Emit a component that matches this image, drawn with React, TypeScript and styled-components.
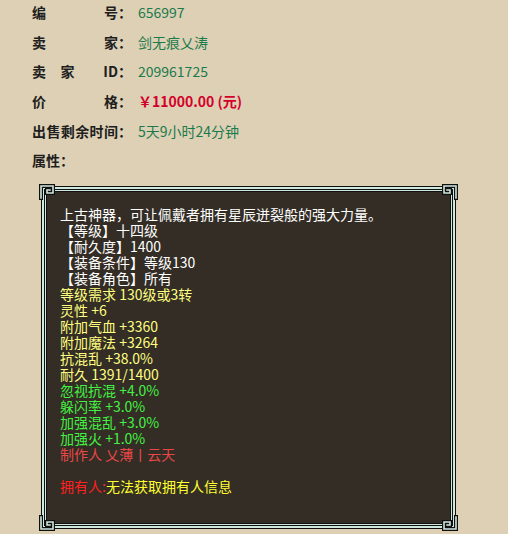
import styled, { createGlobalStyle } from "styled-components";

const GlobalStyle = createGlobalStyle`
  html, body {
    margin: 0;
    padding: 0;
    background: #ddd0b5;
  }
  body {
    font-family: "Noto Sans CJK SC", "Noto Sans", sans-serif;
  }
`;

type Tone = "green" | "red";

const infoRows: { label: string[]; value: string; tone: Tone }[] = [
  { label: ["编", "号"], value: "656997", tone: "green" },
  { label: ["卖", "家"], value: "剑无痕乂涛", tone: "green" },
  { label: ["卖", "家", "", "ID"], value: "209961725", tone: "green" },
  { label: ["价", "格"], value: "￥11000.00 (元)", tone: "red" },
  { label: ["出", "售", "剩", "余", "时", "间"], value: "5天9小时24分钟", tone: "green" },
];

type LineTone = "white" | "yellow" | "green" | "maker";

const lines: { text: string; tone: LineTone }[] = [
  { text: "上古神器，可让佩戴者拥有星辰迸裂般的强大力量。", tone: "white" },
  { text: "【等级】十四级", tone: "white" },
  { text: "【耐久度】1400", tone: "white" },
  { text: "【装备条件】等级130", tone: "white" },
  { text: "【装备角色】所有", tone: "white" },
  { text: "等级需求 130级或3转", tone: "yellow" },
  { text: "灵性 +6", tone: "yellow" },
  { text: "附加气血 +3360", tone: "yellow" },
  { text: "附加魔法 +3264", tone: "yellow" },
  { text: "抗混乱 +38.0%", tone: "yellow" },
  { text: "耐久 1391/1400", tone: "yellow" },
  { text: "忽视抗混 +4.0%", tone: "green" },
  { text: "躲闪率 +3.0%", tone: "green" },
  { text: "加强混乱 +3.0%", tone: "green" },
  { text: "加强火 +1.0%", tone: "green" },
  { text: "制作人 乂薄丨云天", tone: "maker" },
];

const lineColors: Record<LineTone, string> = {
  white: "#ffffff",
  yellow: "#ffff80",
  green: "#44f044",
  maker: "#e84848",
};

const Page = styled.div`
  width: 508px;
  height: 534px;
  overflow: hidden;
  padding: 0 0 0 32px;
  box-sizing: border-box;
`;

const InfoList = styled.div`
  display: flex;
  flex-direction: column;
  gap: 5.7px;
`;

const Row = styled.div`
  display: flex;
  align-items: center;
  height: 24px;
`;

const Label = styled.div`
  width: 86px;
  display: flex;
  justify-content: space-between;
  font-size: 14px;
  font-weight: 700;
  color: #1e1e1e;

  span {
    min-width: 0;
  }
`;

const Colon = styled.span`
  width: 14px;
  font-size: 14px;
  font-weight: 700;
  color: #1e1e1e;
  margin-right: 6px;
`;

const Value = styled.span<{ $tone: Tone }>`
  font-size: 14px;
  color: ${(p) => (p.$tone === "red" ? "#d4002a" : "#1b7a4b")};
  font-weight: ${(p) => (p.$tone === "red" ? 700 : 400)};
`;

const Panel = styled.div`
  position: relative;
  margin: 15px 0 0 10px;
  width: 413px;
  height: 341px;
  box-sizing: border-box;
  background: #332d25;
  border: 2px solid #cfe8de;
  box-shadow: 0 0 0 1px #101010, inset 0 0 0 1px #101010,
    inset 0 0 0 2px #cfe8de, inset 0 0 0 3px #101010;
  padding: 17px 16px 0 16px;
`;

const Line = styled.div<{ $tone: LineTone }>`
  font-size: 14px;
  line-height: 16px;
  height: 16px;
  white-space: nowrap;
  color: ${(p) => lineColors[p.$tone]};
`;

const Gap = styled.div`
  height: 16px;
`;

const Owner = styled.span`
  color: #ff2020;
`;

const OwnerInfo = styled.span`
  color: #ffff30;
`;

const Corner = styled.svg<{ $pos: "tl" | "tr" | "bl" | "br" }>`
  position: absolute;
  width: 16px;
  height: 16px;
  ${(p) => (p.$pos[0] === "t" ? "top: -5px;" : "bottom: -5px;")}
  ${(p) => (p.$pos[1] === "l" ? "left: -5px;" : "right: -5px;")}
  transform: ${(p) =>
    ({ tl: "none", tr: "scaleX(-1)", bl: "scaleY(-1)", br: "scale(-1,-1)" })[p.$pos]};
`;

const CornerKey = ({ pos }: { pos: "tl" | "tr" | "bl" | "br" }) => (
  <Corner $pos={pos} viewBox="0 0 16 16">
    <rect x="0" y="0" width="16" height="16" fill="#ddd0b5" opacity="0" />
    <path
      d="M2 14 V2 H14 V9 H8 V6 H11"
      fill="none"
      stroke="#101010"
      strokeWidth="4"
      strokeLinecap="square"
    />
    <path
      d="M2 14 V2 H14 V9 H8 V6 H11"
      fill="none"
      stroke="#cfe8de"
      strokeWidth="1.6"
      strokeLinecap="square"
    />
  </Corner>
);

export default function App() {
  return (
    <Page>
      <GlobalStyle />
      <InfoList>
        {infoRows.map((r, i) => (
          <Row key={i}>
            <Label>
              {r.label.map((c, j) => (
                <span key={j}>{c}</span>
              ))}
            </Label>
            <Colon>：</Colon>
            <Value $tone={r.tone}>{r.value}</Value>
          </Row>
        ))}
        <Row>
          <Label as="div" style={{ justifyContent: "flex-start" }}>
            属性：
          </Label>
        </Row>
      </InfoList>
      <Panel>
        <CornerKey pos="tl" />
        <CornerKey pos="tr" />
        <CornerKey pos="bl" />
        <CornerKey pos="br" />
        {lines.map((l, i) => (
          <Line key={i} $tone={l.tone}>
            {l.text}
          </Line>
        ))}
        <Gap />
        <Line $tone="white">
          <Owner>拥有人:</Owner>
          <OwnerInfo>无法获取拥有人信息</OwnerInfo>
        </Line>
      </Panel>
    </Page>
  );
}
